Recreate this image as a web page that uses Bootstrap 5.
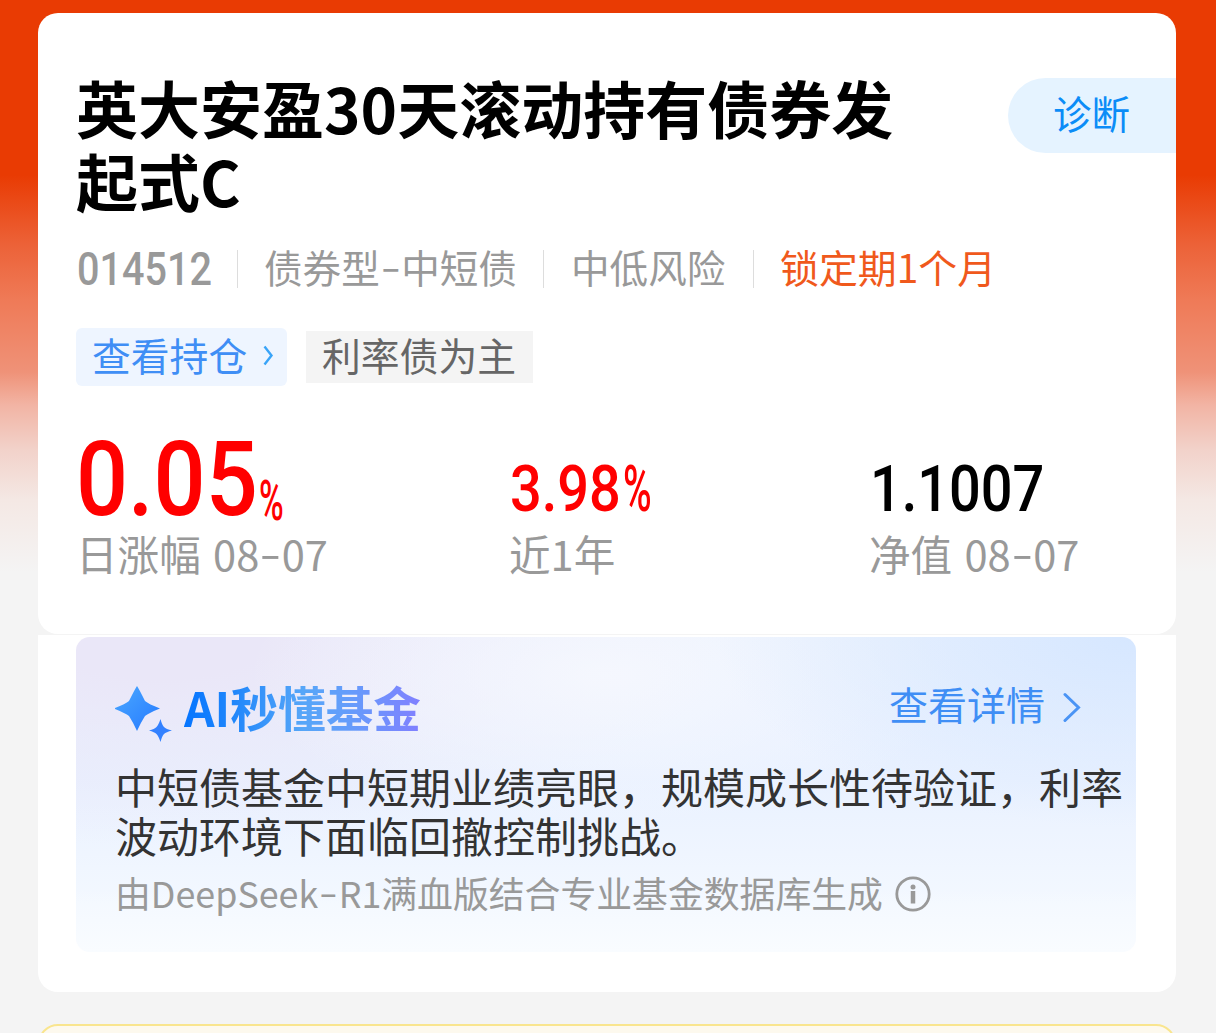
<!DOCTYPE html>
<html lang="zh-CN">
<head>
    <meta charset="UTF-8">
    <meta name="viewport" content="width=device-width, initial-scale=1.0">
    <title>英大安盈30天滚动持有债券发起式C</title>
    <link href="https://cdn.jsdelivr.net/npm/bootstrap@5.3.2/dist/css/bootstrap.min.css" rel="stylesheet">
    <style>
        body {
            font-family: "Noto Sans CJK SC", "Noto Sans", sans-serif;
            height: 1033px;
            padding: 13px 40px 0 38px;
            overflow: hidden;
            white-space: nowrap;
            background: #f4f4f4 linear-gradient(#e93b03 0, #e93b03 175px, #ec6238 245px, #ef7a57 300px, #ef9278 372px, #f2b4a4 405px, #f2d2ca 450px, #f4e8e4 500px, #f4f4f4 572px) no-repeat;
        }
        .fund-card {
            height: 621px;
            padding: 58px 0 0 38px;
            border-radius: 20px;
        }
        .fund-title {
            font-size: 62px;
            font-weight: 700;
            line-height: 73px;
            color: #000;
        }
        .diagnose {
            width: 168px;
            height: 75px;
            margin-top: 7px;
            padding-left: 45px;
            font-size: 38.5px;
            line-height: 69px;
            color: #0b8cf7;
            background: #e5f3ff;
            border-radius: 38px 0 0 38px;
        }
        .meta {
            height: 40px;
            margin-top: 33px;
            font-size: 38.6px;
            line-height: 32px;
            color: #999;
        }
        .meta .sep {
            width: 1px;
            height: 38px;
            background: #ddd;
        }
        .meta-code { width: 161px; }
        .meta-type {
            width: 305px;
            padding-left: 26px;
        }
        .meta-risk {
            width: 209px;
            padding-left: 27px;
        }
        .meta-lock {
            padding-left: 26px;
            font-size: 38.9px;
            color: #f0591c;
        }
        .din {
            font-family: Roboto, sans-serif;
            font-weight: 500;
            display: inline-block;
            transform-origin: 0 50%;
        }
        .code {
            width: 160px;
            font-size: 46px;
            line-height: 39px;
            transform: translateX(1px) scaleX(.86);
        }
        .dash {
            display: inline-block;
            text-align: center;
            transform: translateY(-2px) scaleX(1.5);
        }
        .chips {
            margin-top: 38px;
            font-size: 38.8px;
        }
        .chip-link {
            width: 211px;
            height: 58px;
            padding-left: 16px;
            line-height: 52px;
            color: #3f8ef5;
            background: #eef5ff;
            border-radius: 6px;
        }
        .chip-tag {
            height: 52px;
            width: 227px;
            margin-left: 19px;
            padding-left: 16px;
            line-height: 46px;
            color: #666;
            background: #f4f4f4;
        }
        .stats { margin-top: 54px; }
        .stat-day { width: 433px; }
        .stat-year { width: 360px; }
        .figure {
            height: 85px;
            color: #f00;
        }
        .figure-big {
            width: 182px;
            font-size: 103px;
            line-height: 80px;
            transform: scaleX(.89);
        }
        .figure-mid {
            font-size: 65px;
            line-height: 99px;
            transform: translateX(1px) scaleX(.86);
        }
        .year-value { width: 113px; }
        .pct {
            font-weight: 500;
            transform: translateX(1px) scaleX(.6);
        }
        .pct-small {
            font-size: 56px;
            line-height: 123px;
        }
        .stat-label {
            font-size: 41.6px;
            line-height: 56px;
            word-spacing: 3px;
            color: #999;
        }
        .ai-card {
            height: 357px;
            margin-top: 1px;
            padding: 2px 40px 0 38px;
            border-radius: 0 0 20px 20px;
        }
        .ai-panel {
            height: 315px;
            padding: 40px 0 0 39px;
            border-radius: 14px;
            background:
                linear-gradient(rgba(248,251,255,0) 80%, #f9fcff),
                radial-gradient(420px 190px at 100% 0, #d6e7ff, rgba(214,231,255,0)),
                radial-gradient(360px 150px at 50% 12%, rgba(246,248,254,.9), rgba(246,248,254,0)),
                radial-gradient(560px 210px at 8% 0, #eae7f8 20%, rgba(236,233,249,0)),
                linear-gradient(#ebf2fe, #e9f1ff 45%, #f3f8ff 85%);
        }
        .ai-title {
            margin-left: 11px;
            font-size: 47.7px;
            font-weight: 700;
            line-height: 60px;
            color: transparent;
            background: linear-gradient(90deg, #0675ff, #1f86fb 20%, #56a6f8 50%, #659cfb 70%, #8180ff);
            -webkit-background-clip: text;
            background-clip: text;
        }
        .ai-more {
            margin: 0 55px 0 auto;
            font-size: 39px;
            line-height: 52px;
            color: #3f8ef5;
        }
        .more-arrow { margin: 15px 0 0 18px; }
        .ai-text {
            margin-top: 16px;
            font-size: 42px;
            line-height: 49px;
            color: #333;
        }
        .ai-source {
            margin-top: 11px;
            font-size: 35.85px;
            line-height: 44px;
            color: #999;
        }
        .info-icon { margin: 6px 0 0 12px; }
        .notice {
            height: 60px;
            margin-top: 32px;
            border: 2px solid #f9e58e;
            border-radius: 20px;
            background: #fdf9ee;
        }
    </style>
</head>
<body>
    <!-- Fund summary -->
    <div class="fund-card bg-white">
        <div class="d-flex justify-content-between align-items-start">
            <h1 class="fund-title mb-0">英大安盈30天滚动持有债券发<br>起式C</h1>
            <div class="diagnose">诊断</div>
        </div>

        <div class="meta d-flex">
            <div class="meta-code"><span class="din code">014512</span></div>
            <div class="sep"></div>
            <div class="meta-type">债券型<span class="dash mx-1">-</span>中短债</div>
            <div class="sep"></div>
            <div class="meta-risk">中低风险</div>
            <div class="sep"></div>
            <div class="meta-lock">锁定期1个月</div>
        </div>

        <div class="chips d-flex align-items-center">
            <div class="chip-link d-flex">
                查看持仓
                <svg class="ms-3 mt-3" width="12" height="24" viewBox="0 0 12 24" fill="none" stroke="#39a4f8" stroke-width="2.4"><path d="M1.500 2.500 8.500 11.500 1.500 20.500"/></svg>
            </div>
            <div class="chip-tag">利率债为主</div>
        </div>

        <div class="stats d-flex">
            <div class="stat-day">
                <div class="figure d-flex">
                    <span class="din figure-big">0.05</span>
                    <span class="din pct pct-small">%</span>
                </div>
                <div class="stat-label">日涨幅 08<span class="dash mx-1">-</span>07</div>
            </div>
            <div class="stat-year">
                <div class="figure d-flex">
                    <span class="din figure-mid year-value">3.98</span>
                    <span class="din figure-mid pct">%</span>
                </div>
                <div class="stat-label">近1年</div>
            </div>
            <div>
                <div class="figure text-black"><span class="din figure-mid">1.1007</span></div>
                <div class="stat-label">净值 08<span class="dash mx-1">-</span>07</div>
            </div>
        </div>
    </div>

    <!-- AI summary -->
    <div class="ai-card bg-white">
        <div class="ai-panel">
            <div class="d-flex">
                <svg class="mt-2" width="58" height="60" viewBox="1 1 58 60">
                    <defs>
                        <linearGradient id="star" x1="0" y1="0" x2="1" y2="1">
                            <stop offset="0" stop-color="#4ba9ff"/>
                            <stop offset="1" stop-color="#2579ff"/>
                        </linearGradient>
                    </defs>
                    <path fill="url(#star)" d="M23 2Q24.500 4 31 17Q34.500 20 46 24.500Q34.500 29 31 32Q26.500 39 23 47Q19.500 39 15 32Q11.500 29 0 24.500Q11.500 20 15 17Q21.500 4 23 2Z"/>
                    <path fill="#3381ff" d="M46.500 35Q48 41 50 43Q52 45 58 46.500Q52 48 50 50Q48 52 46.500 58Q44.500 52 42.500 50Q40.500 48 35 46.500Q40.500 45 42.500 43Q44.500 41 46.500 35Z"/>
                </svg>
                <div class="ai-title">AI秒懂基金</div>
                <div class="ai-more d-flex">
                    查看详情
                    <svg class="more-arrow" width="18" height="32" viewBox="0 0 18 32" fill="none" stroke="#4a94f5" stroke-width="3" stroke-linecap="round"><path d="M2 2.500 15.500 15.500 2 28.500"/></svg>
                </div>
            </div>
            <div class="ai-text">中短债基金中短期业绩亮眼，规模成长性待验证，利率<br>波动环境下面临回撤控制挑战。</div>
            <div class="ai-source d-flex">
                <div>由DeepSeek<span class="dash mx-1">-</span>R1满血版结合专业基金数据库生成</div>
                <svg class="info-icon" width="36" height="36" viewBox="0 0 36 36">
                    <circle cx="18" cy="18" r="16.200" fill="none" stroke="#999" stroke-width="2.800"/>
                    <circle cx="18" cy="11" r="2.500" fill="#999"/>
                    <path d="M18 15V27.500" stroke="#999" stroke-width="4.500"/>
                </svg>
            </div>
        </div>
    </div>

    <div class="notice"></div>

    <script src="https://cdn.jsdelivr.net/npm/bootstrap@5.3.2/dist/js/bootstrap.bundle.min.js"></script>
</body>
</html>
